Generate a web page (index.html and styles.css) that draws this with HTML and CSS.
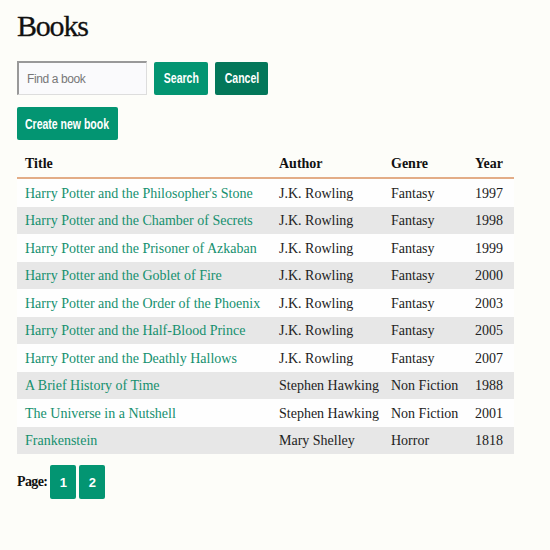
FILE: index.html
```html
<!DOCTYPE html>
<html>
<head>
<meta charset="utf-8">
<link rel="stylesheet" href="styles.css">
</head>
<body>
<h1 class="title">Books</h1>
<form class="search">
  <input class="search-input" type="text" placeholder="Find a book">
  <button class="btn btn-search" type="button"><span class="btn-label">Search</span></button>
  <button class="btn btn-dark" type="button"><span class="btn-label">Cancel</span></button>
</form>
<div class="actions"><button class="btn btn-create" type="button"><span class="btn-label">Create new book</span></button></div>
<table class="books">
  <thead>
    <tr><th class="c-title">Title</th><th class="c-author">Author</th><th class="c-genre">Genre</th><th class="c-year">Year</th></tr>
  </thead>
  <tbody>
    <tr><td><a href="#">Harry Potter and the Philosopher's Stone</a></td><td>J.K. Rowling</td><td>Fantasy</td><td>1997</td></tr>
    <tr><td><a href="#">Harry Potter and the Chamber of Secrets</a></td><td>J.K. Rowling</td><td>Fantasy</td><td>1998</td></tr>
    <tr><td><a href="#">Harry Potter and the Prisoner of Azkaban</a></td><td>J.K. Rowling</td><td>Fantasy</td><td>1999</td></tr>
    <tr><td><a href="#">Harry Potter and the Goblet of Fire</a></td><td>J.K. Rowling</td><td>Fantasy</td><td>2000</td></tr>
    <tr><td><a href="#">Harry Potter and the Order of the Phoenix</a></td><td>J.K. Rowling</td><td>Fantasy</td><td>2003</td></tr>
    <tr><td><a href="#">Harry Potter and the Half-Blood Prince</a></td><td>J.K. Rowling</td><td>Fantasy</td><td>2005</td></tr>
    <tr><td><a href="#">Harry Potter and the Deathly Hallows</a></td><td>J.K. Rowling</td><td>Fantasy</td><td>2007</td></tr>
    <tr><td><a href="#">A Brief History of Time</a></td><td>Stephen Hawking</td><td>Non Fiction</td><td>1988</td></tr>
    <tr><td><a href="#">The Universe in a Nutshell</a></td><td>Stephen Hawking</td><td>Non Fiction</td><td>2001</td></tr>
    <tr><td><a href="#">Frankenstein</a></td><td>Mary Shelley</td><td>Horror</td><td>1818</td></tr>
  </tbody>
</table>
<div class="pager">
  <span class="pager-label">Page:</span>
  <a class="btn page" href="#">1</a>
  <a class="btn page" href="#">2</a>
</div>
</body>
</html>
```
FILE: styles.css
```css
html { background: #fdfdf9; }
body {
  margin: 0;
  padding: 8px 17px;
  font-family: "Liberation Serif", "DejaVu Serif", serif;
  color: #111;
}
.title {
  font-size: 30px;
  font-weight: normal;
  margin: 1px 0 18px 0;
  line-height: 34px;
  letter-spacing: -1.2px;
  -webkit-text-stroke: 0.3px #111;
}
.search {
  display: flex;
  gap: 7px;
  align-items: center;
  margin: 0;
}
.search-input {
  box-sizing: border-box;
  width: 130px;
  height: 34px;
  border: 1px solid #ddd;
  border-top: 2px solid #999;
  border-left: 2px solid #999;
  background: #fafafc;
  padding: 0 8px;
  font-family: "Liberation Sans", Arial, sans-serif;
  font-size: 12px;
  letter-spacing: -0.4px;
  color: #333;
}
.search-input::placeholder { color: #777; }
.btn {
  box-sizing: border-box;
  display: inline-flex;
  align-items: center;
  justify-content: center;
  height: 33px;
  padding: 0;
  border: none;
  border-radius: 2px;
  background: #039572;
  color: #fff;
  font-family: "Liberation Sans", Arial, sans-serif;
  font-weight: bold;
  font-size: 14px;
  text-decoration: none;
  overflow: hidden;
  white-space: nowrap;
}
.btn-label {
  display: inline-block;
  transform: scaleX(0.75);
}
.btn-search { width: 54px; }
.btn-dark { width: 53px; background: #03775a; }
.btn-create { width: 101px; }
.actions { margin: 12px 0 9px 0; }
.books {
  width: 497px;
  border-collapse: collapse;
  table-layout: fixed;
  font-size: 14px;
}
.books th {
  text-align: left;
  font-weight: bold;
  font-size: 14px;
  padding: 7px 8px 5px 8px;
  border-bottom: 2px solid #e3ad87;
  white-space: nowrap;
}
.c-title { width: 238px; }
.c-author { width: 96px; }
.c-genre { width: 68px; }
.books td {
  padding: 2px 8px 0 8px;
  height: 25.5px;
  color: #222;
  white-space: nowrap;
}
.books tbody tr:nth-child(odd) td { background: #fefefe; }
.books tbody tr:nth-child(even) td { background: #e7e7e7; }
.books a { color: #15906e; text-decoration: none; }
.pager {
  display: flex;
  align-items: center;
  gap: 3px;
  margin-top: 11px;
}
.pager-label { font-weight: bold; font-size: 14px; letter-spacing: -0.6px; }
.page { width: 26px; height: 34px; font-size: 13px; }
```
